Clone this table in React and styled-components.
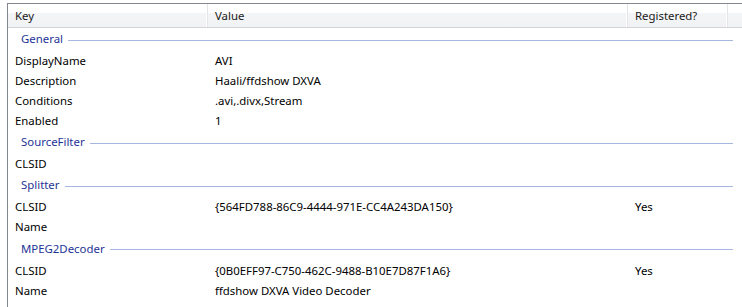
import React from "react";
import styled, { createGlobalStyle } from "styled-components";

const GlobalStyle = createGlobalStyle`
  html, body {
    margin: 0;
    padding: 0;
    background: #fff;
  }
  body {
    font-family: "Noto Sans", "Open Sans", sans-serif;
    font-size: 11.4px;
    color: #000;
  }
`;

const COLS = "200px 420px 100px 1fr";

const Frame = styled.div`
  margin: 3px 0 0 7px;
  width: 760px;
  height: 303px;
  border-top: 1px solid #828790;
  border-left: 1px solid #828790;
  overflow: hidden;
`;

const Header = styled.div`
  display: grid;
  grid-template-columns: ${COLS};
  height: 23px;
  background: linear-gradient(#ffffff 0%, #ffffff 40%, #f4f5f7 41%, #f1f2f4 100%);
  border-bottom: 1px solid #d5d5d5;
`;

const HeaderCell = styled.div`
  display: flex;
  align-items: center;
  padding-left: 7px;
  border-right: 1px solid #e3e5e9;
  box-shadow: inset -1px 0 0 #ffffff;
  color: #1a1a1a;
`;

const GroupRow = styled.div`
  display: flex;
  align-items: center;
  width: 725px;
  box-sizing: border-box;
  height: ${(p) => p.$h || 23}px;
  padding: 0 0 2px 13px;
  color: #1e3496;
  gap: 5px;
`;

const GroupLine = styled.div`
  flex: 1;
  height: 1px;
  background: #a7b7e0;
  margin-top: 3px;
`;

const Row = styled.div`
  display: grid;
  grid-template-columns: ${COLS};
  box-sizing: border-box;
  height: 20px;
  padding-bottom: 2px;
  align-items: center;
`;

const Cell = styled.div`
  padding-left: 7px;
  white-space: nowrap;
`;

const groups = [
  {
    name: "General",
    rows: [
      ["DisplayName", "AVI", ""],
      ["Description", "Haali/ffdshow DXVA", ""],
      ["Conditions", ".avi,.divx,Stream", ""],
      ["Enabled", "1", ""],
    ],
  },
  { name: "SourceFilter", rows: [["CLSID", "", ""]] },
  {
    name: "Splitter",
    rows: [
      ["CLSID", "{564FD788-86C9-4444-971E-CC4A243DA150}", "Yes"],
      ["Name", "", ""],
    ],
  },
  {
    name: "MPEG2Decoder",
    h: 24,
    rows: [
      ["CLSID", "{0B0EFF97-C750-462C-9488-B10E7D87F1A6}", "Yes"],
      ["Name", "ffdshow DXVA Video Decoder", ""],
    ],
  },
];

const App = () => (
  <>
    <GlobalStyle />
    <Frame>
      <Header>
        <HeaderCell>Key</HeaderCell>
        <HeaderCell>Value</HeaderCell>
        <HeaderCell>Registered?</HeaderCell>
        <HeaderCell />
      </Header>
      {groups.map((g) => (
        <React.Fragment key={g.name}>
          <GroupRow $h={g.h}>
            {g.name}
            <GroupLine />
          </GroupRow>
          {g.rows.map((r, i) => (
            <Row key={i}>
              <Cell>{r[0]}</Cell>
              <Cell>{r[1]}</Cell>
              <Cell>{r[2]}</Cell>
              <Cell />
            </Row>
          ))}
        </React.Fragment>
      ))}
    </Frame>
  </>
);

export default App;
